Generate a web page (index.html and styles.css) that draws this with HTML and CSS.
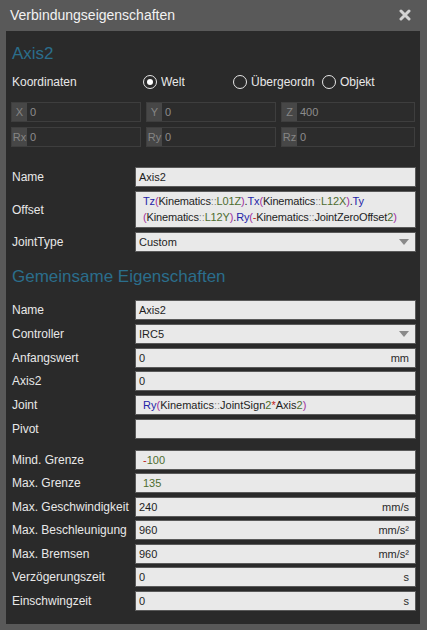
FILE: index.html
```html
<!DOCTYPE html>
<html lang="de">
<head>
<meta charset="utf-8">
<title>Verbindungseigenschaften</title>
<link rel="stylesheet" href="styles.css">
</head>
<body>
<div class="window">
  <div class="titlebar">
    <span class="title">Verbindungseigenschaften</span>
    <svg class="close" width="12" height="12" viewBox="0 0 12 12"><path d="M2 2 L10 10 M10 2 L2 10" stroke="#d4d4d4" stroke-width="3" stroke-linecap="round"/></svg>
  </div>
  <div class="panel">
    <h2 class="heading first">Axis2</h2>
    <div class="coord-row">
      <span class="label">Koordinaten</span>
      <div class="radios">
        <label class="radio"><span class="circle checked"></span><span class="rtext">Welt</span></label>
        <label class="radio"><span class="circle"></span><span class="rtext">Übergeordnet</span></label>
        <label class="radio"><span class="circle"></span><span class="rtext">Objekt</span></label>
      </div>
    </div>
    <div class="coords">
      <div class="cfield"><span class="ctag">X</span><span class="cval">0</span></div>
      <div class="cfield"><span class="ctag">Y</span><span class="cval">0</span></div>
      <div class="cfield"><span class="ctag">Z</span><span class="cval">400</span></div>
      <div class="cfield"><span class="ctag">Rx</span><span class="cval">0</span></div>
      <div class="cfield"><span class="ctag">Ry</span><span class="cval">0</span></div>
      <div class="cfield"><span class="ctag">Rz</span><span class="cval">0</span></div>
    </div>

    <div class="form top">
      <span class="label">Name</span><div class="input">Axis2</div>
      <span class="label">Offset</span>
      <div class="input multi expr"><span class="fn">Tz</span><span class="p">(</span>Kinematics<span class="op">::</span><span class="n">L01Z</span><span class="p">)</span>.<span class="fn">Tx</span><span class="p">(</span>Kinematics<span class="op">::</span><span class="n">L12X</span><span class="p">)</span>.<span class="fn">Ty</span><br><span class="p">(</span>Kinematics<span class="op">::</span><span class="n">L12Y</span><span class="p">)</span>.<span class="fn">Ry</span><span class="p">(</span><span class="m">-</span>Kinematics<span class="op">::</span>JointZeroOffset<span class="n">2</span><span class="p">)</span></div>
      <span class="label">JointType</span><div class="input select">Custom<span class="arrow"></span></div>
    </div>

    <h2 class="heading second">Gemeinsame Eigenschaften</h2>
    <div class="form common">
      <span class="label">Name</span><div class="input">Axis2</div>
      <span class="label">Controller</span><div class="input select">IRC5<span class="arrow"></span></div>
      <span class="label">Anfangswert</span><div class="input unit">0<span class="u">mm</span></div>
      <span class="label">Axis2</span><div class="input">0</div>
      <span class="label">Joint</span><div class="input expr"><span class="fn">Ry</span><span class="p">(</span>Kinematics<span class="op">::</span>JointSign<span class="n">2</span><span class="m">*</span>Axis<span class="n">2</span><span class="p">)</span></div>
      <span class="label">Pivot</span><div class="input"></div>
    </div>
    <div class="form limits">
      <span class="label">Mind. Grenze</span><div class="input expr"><span class="m">-</span><span class="n">100</span></div>
      <span class="label">Max. Grenze</span><div class="input expr"><span class="n">135</span></div>
      <span class="label">Max. Geschwindigkeit</span><div class="input unit">240<span class="u">mm/s</span></div>
      <span class="label">Max. Beschleunigung</span><div class="input unit">960<span class="u">mm/s²</span></div>
      <span class="label">Max. Bremsen</span><div class="input unit">960<span class="u">mm/s²</span></div>
      <span class="label">Verzögerungszeit</span><div class="input unit">0<span class="u">s</span></div>
      <span class="label">Einschwingzeit</span><div class="input unit">0<span class="u">s</span></div>
    </div>
  </div>
</div>
</body>
</html>
```
FILE: styles.css
```css
* { box-sizing: border-box; }
html, body { margin: 0; padding: 0; }
body {
  width: 427px;
  height: 630px;
  background: #595959;
  font-family: "Liberation Sans", Arial, sans-serif;
  font-size: 12px;
  color: #e8e8e8;
  overflow: hidden;
}
.window { width: 427px; height: 630px; display: flex; flex-direction: column; }
.titlebar {
  height: 31px;
  flex: none;
  display: flex;
  align-items: center;
  justify-content: space-between;
  padding: 0 16px 0 10px;
}
.title { font-size: 14px; color: #f2f2f2; padding-bottom: 2px; }
.close { display: block; margin-top: -2px; }
.panel {
  height: 593px;
  margin: 0 7px 0 6px;
  background: #2a2a2a;
  padding: 0 4px 0 5px;
}
.heading {
  margin: 0;
  font-weight: normal;
  color: #2b6e8c;
  font-size: 17px;
  line-height: 22px;
  padding-left: 1px;
}
.heading.first { padding-top: 12px; }
.heading.second { margin-top: 14px; }
.label { padding-left: 1px; line-height: 20px; white-space: nowrap; }
.coord-row {
  display: flex;
  align-items: center;
  height: 20px;
  margin-top: 7px;
}
.coord-row .label { width: 132px; flex: none; }
.radios { display: grid; grid-template-columns: 90px 89px 80px; }
.radio { display: flex; align-items: center; gap: 4px; overflow: hidden; white-space: nowrap; }
.circle {
  flex: none;
  width: 14px;
  height: 14px;
  border: 1.5px solid #e6e6e6;
  border-radius: 50%;
  position: relative;
}
.circle.checked::after {
  content: "";
  position: absolute;
  left: 2.5px; top: 2.5px;
  width: 6px; height: 6px;
  border-radius: 50%;
  background: #ffffff;
}
.rtext { overflow: hidden; }
.radio:nth-child(2) .rtext { width: 64px; }

.coords {
  display: grid;
  grid-template-columns: 130px 130px 134px;
  column-gap: 5px;
  row-gap: 5px;
  margin-top: 10px;
}
.cfield {
  height: 20px;
  border: 1px solid #3e3e3e;
  background: #2c2c2c;
  display: flex;
  align-items: stretch;
}
.ctag {
  width: 15px;
  background: #474747;
  color: #858585;
  text-align: center;
  line-height: 18px;
  flex: none;
  font-size: 11px;
}
.cval { color: #8c8c8c; line-height: 18px; padding-left: 3px; font-size: 11px; }

.form {
  display: grid;
  grid-template-columns: 124px 1fr;
  align-items: center;
}
.form.top { margin-top: 20px; row-gap: 4px; }
.form.common { margin-top: 12px; row-gap: 3.8px; }
.form.limits { margin-top: 11px; row-gap: 3.5px; }
.input {
  height: 20px;
  background: #e9e9e9;
  border: 1px solid #5a5a5a;
  color: #1e1e1e;
  font-size: 11px;
  line-height: 18px;
  padding: 0 6px 0 3px;
  white-space: nowrap;
  overflow: hidden;
  position: relative;
  display: flex;
}
.input.multi { height: 37px; display: block; line-height: 16px; padding-top: 1px; letter-spacing: -0.15px; }
.input.expr { padding-left: 7px; }
.select { justify-content: space-between; align-items: center; }
.arrow {
  width: 0; height: 0;
  border-left: 5px solid transparent;
  border-right: 5px solid transparent;
  border-top: 6px solid #8a8a8a;
  margin-right: 0;
}
.unit { justify-content: space-between; }
.u { color: #2a2a2a; }
.fn { color: #2424a8; }
.p { color: #a0309f; }
.op { color: #8a8a8a; }
.n { color: #4e6d30; }
.m { color: #c01818; }
```
